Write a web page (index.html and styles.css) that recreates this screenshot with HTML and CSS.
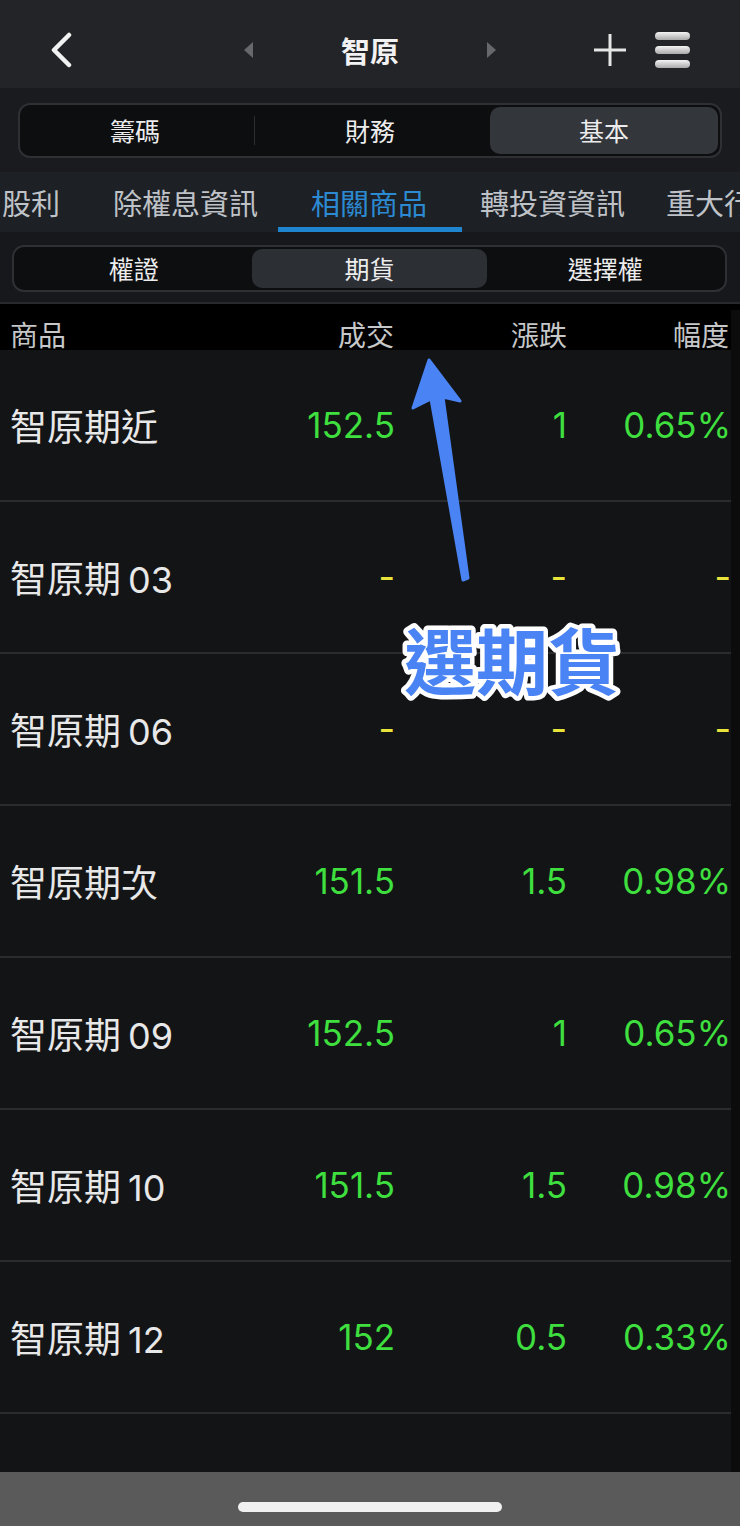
FILE: index.html
```html
<!DOCTYPE html>
<html lang="zh-Hant">
<head>
  <meta charset="UTF-8" />
  <meta name="viewport" content="width=device-width, initial-scale=1.0" />
  <title>智原 - 相關商品</title>
  <link rel="stylesheet" href="styles.css">
</head>
<body>
  <div class="screen">
    <header class="navbar">
      <div class="nav-left">
        <svg class="back" viewBox="0 0 24 36"><path d="M20 3 L5 18 L20 33" /></svg>
      </div>
      <div class="nav-center">
        <span class="tri tri-left"></span>
        <h1>智原</h1>
        <span class="tri tri-right"></span>
      </div>
      <div class="nav-right">
        <svg class="plus" viewBox="0 0 34 34"><path d="M17 1 V33 M1 17 H33" /></svg>
        <div class="burger"><i></i><i></i><i></i></div>
      </div>
    </header>

    <section class="seg-wrap">
      <div class="seg seg-main">
        <div class="seg-item">籌碼</div>
        <div class="seg-item sep">財務</div>
        <div class="seg-item active">基本</div>
      </div>
    </section>

    <nav class="tabs">
      <span class="tab">股利</span>
      <span class="tab">除權息資訊</span>
      <span class="tab active">相關商品</span>
      <span class="tab">轉投資資訊</span>
      <span class="tab last">重大行事曆</span>
    </nav>

    <section class="sub-wrap">
      <div class="seg seg-sub">
        <div class="seg-item">權證</div>
        <div class="seg-item active">期貨</div>
        <div class="seg-item">選擇權</div>
      </div>
    </section>

    <div class="table-area">
      <div class="table">
        <div class="row head">
          <span>商品</span>
          <span class="num">成交</span>
          <span class="num">漲跌</span>
          <span class="num">幅度</span>
        </div>
        <div class="list">
          <div class="row">
            <span class="name">智原期近</span>
            <span class="num up">152.5</span>
            <span class="num up">1</span>
            <span class="num up">0.65%</span>
          </div>
          <div class="row">
            <span class="name">智原期<span class="mon">03</span></span>
            <span class="num flat">-</span>
            <span class="num flat">-</span>
            <span class="num flat">-</span>
          </div>
          <div class="row">
            <span class="name">智原期<span class="mon">06</span></span>
            <span class="num flat">-</span>
            <span class="num flat">-</span>
            <span class="num flat">-</span>
          </div>
          <div class="row">
            <span class="name">智原期次</span>
            <span class="num up">151.5</span>
            <span class="num up">1.5</span>
            <span class="num up">0.98%</span>
          </div>
          <div class="row">
            <span class="name">智原期<span class="mon">09</span></span>
            <span class="num up">152.5</span>
            <span class="num up">1</span>
            <span class="num up">0.65%</span>
          </div>
          <div class="row">
            <span class="name">智原期<span class="mon">10</span></span>
            <span class="num up">151.5</span>
            <span class="num up">1.5</span>
            <span class="num up">0.98%</span>
          </div>
          <div class="row">
            <span class="name">智原期<span class="mon">12</span></span>
            <span class="num up">152</span>
            <span class="num up">0.5</span>
            <span class="num up">0.33%</span>
          </div>
          <div class="row">
            <span class="name"></span>
          </div>
        </div>
      </div>
      <div class="track"></div>
    </div>

    <div class="home-bar"><span class="pill"></span></div>

    <!-- 標示：選期貨 -->
    <svg class="note" viewBox="0 0 740 760">
      <polygon class="arrow" points="429,360 460,401 443,397 468,578 463,580 431,399 413,408" />
      <text class="note-text" x="512" y="689">選期貨</text>
    </svg>
  </div>
</body>
</html>
```

FILE: styles.css
```css
* { box-sizing: border-box; margin: 0; padding: 0; }

html, body {
  width: 740px;
  height: 1526px;
  background: #131416;
  font-family: Inter, "Noto Sans CJK TC", sans-serif;
  overflow: hidden;
}

.screen {
  position: relative;
  width: 740px;
  height: 1526px;
  display: flex;
  flex-direction: column;
}

/* 上方導覽列 */
.navbar {
  height: 88px;
  padding-top: 12px;
  background: #232427;
  display: grid;
  grid-template-columns: 1fr auto 1fr;
  align-items: center;
}

.nav-left { padding-left: 49px; display: flex; }

.back {
  width: 24px; height: 36px;
  fill: none;
  stroke: #f2f2f2;
  stroke-width: 4.5;
  stroke-linecap: round;
  stroke-linejoin: round;
}

.nav-center {
  display: flex;
  align-items: center;
  gap: 88px;
}

.nav-center h1 {
  font-family: "Noto Sans CJK TC", sans-serif;
  font-size: 29px;
  font-weight: 700;
  color: #f2f2f2;
  line-height: 40px;
}

.tri {
  width: 0; height: 0;
  border-top: 8px solid transparent;
  border-bottom: 8px solid transparent;
}
.tri-left { border-right: 9px solid #67686b; }
.tri-right { border-left: 9px solid #67686b; }

.nav-right {
  display: flex;
  justify-content: flex-end;
  align-items: center;
  gap: 28px;
  padding-right: 50px;
}

.plus {
  width: 34px; height: 34px;
  fill: none;
  stroke: #e6e6e6;
  stroke-width: 3;
}

.burger {
  width: 35px;
  display: flex;
  flex-direction: column;
  gap: 6px;
}
.burger i {
  display: block;
  height: 8px;
  border-radius: 4px;
  background: linear-gradient(to bottom, #f4f4f4, #a9a9a9);
}

/* 分段按鈕 */
.seg-wrap {
  background: #1a1b1e;
  padding: 15px 18px 14px;
}

.seg {
  display: grid;
  grid-template-columns: repeat(3, 1fr);
  background: #0d0e10;
  border: 2px solid #2f3034;
  border-radius: 12px;
  padding: 2px;
}

.seg-item {
  position: relative;
  text-align: center;
  font-family: "Noto Sans CJK TC", sans-serif;
  color: #ececec;
  border-radius: 10px;
}

.seg-main .seg-item { height: 47px; line-height: 47px; font-size: 25px; }
.seg-sub .seg-item { height: 39px; line-height: 39px; font-size: 25px; }

.seg-main .seg-item:first-child { padding-right: 6px; }
.seg-main .seg-item.active { margin-left: 4px; }

.seg-item.active { background: #33363b; }
.seg-sub .seg-item.active { background: #2c2f34; }

.seg-item.sep::before {
  content: "";
  position: absolute;
  left: 0; top: 9px; bottom: 9px;
  width: 1px;
  background: #2c2d31;
}

/* 子分頁 */
.tabs {
  height: 60px;
  background: #1d2025;
  display: flex;
  gap: 53px;
  padding-left: 2px;
  overflow: hidden;
  white-space: nowrap;
}

.tab {
  position: relative;
  flex-shrink: 0;
  font-family: "Noto Sans CJK TC", sans-serif;
  font-size: 29px;
  line-height: 60px;
  color: #bfc2c7;
}

.tab.last { margin-left: -12px; }

.tab.active { color: #2b8ad2; }
.tab.active::after {
  content: "";
  position: absolute;
  left: -33px; right: -35px; bottom: 0;
  height: 5px;
  background: #1f85cf;
}

.sub-wrap {
  background: #17181b;
  padding: 13px 13px 10px 12px;
  border-bottom: 2px solid #28292c;
  height: 72px;
}

/* 報價表 */
.table-area {
  flex: 1;
  display: flex;
  background: #000;
  min-height: 0;
}

.table {
  flex: 1;
  display: flex;
  flex-direction: column;
  min-height: 0;
}

.track {
  width: 9px;
  margin-top: 6px;
  background: #0c0c0d;
}

.row {
  display: grid;
  grid-template-columns: 244px 140px 173px 164px;
  align-items: center;
  padding-left: 10px;
}

.row.head {
  height: 46px;
  background: #000;
  padding-top: 14px;
  font-family: "Noto Sans CJK TC", sans-serif;
  font-size: 28px;
  line-height: 32px;
  color: #c6c7c9;
}

.row.head .num:last-child { padding-right: 2px; }

.list {
  flex: 1;
  background: #131416;
  overflow: hidden;
}

.list .row {
  height: 152px;
  border-bottom: 2px solid #2b2c30;
  font-size: 35px;
}

.num { text-align: right; }
.list .num:nth-child(2) { margin-right: -1px; }

.name {
  font-family: "Noto Sans CJK TC", sans-serif;
  color: #e8e8e8;
  font-size: 37px;
}

.mon {
  font-family: Inter, sans-serif;
  font-size: 36px;
  margin-left: 7px;
}

.up { color: #3edf3e; }
.flat { color: #e8e43a; font-size: 36px; }

/* 底部 */
.home-bar {
  height: 54px;
  background: #5a5a5a;
  display: flex;
  justify-content: center;
  padding-top: 30px;
}

.pill {
  width: 264px;
  height: 10px;
  border-radius: 5px;
  background: #f0f0f0;
}

.note {
  position: absolute;
  left: 0; top: 0;
  width: 740px; height: 760px;
  pointer-events: none;
}

.arrow {
  fill: #4a84f4;
  stroke: #4a84f4;
  stroke-width: 3;
  stroke-linejoin: round;
}

.note-text {
  font-family: "Noto Sans CJK TC", sans-serif;
  font-size: 72px;
  font-weight: 700;
  text-anchor: middle;
  fill: #4a84f4;
  stroke: #ffffff;
  stroke-width: 9;
  stroke-linejoin: round;
  paint-order: stroke fill;
}
```
